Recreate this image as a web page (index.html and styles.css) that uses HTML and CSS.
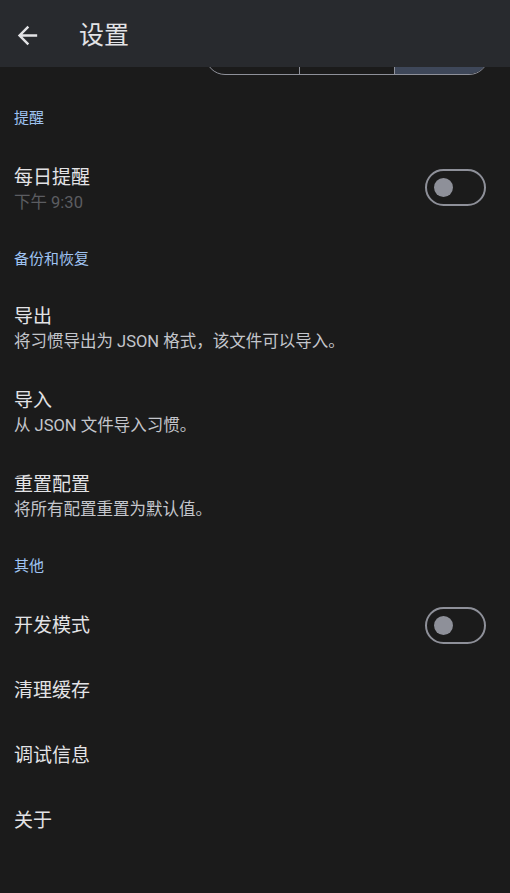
FILE: index.html
```html
<!DOCTYPE html>
<html lang="zh-CN">
<head>
    <meta charset="UTF-8">
    <meta name="viewport" content="width=device-width, initial-scale=1.0">
    <title>设置</title>
    <link rel="stylesheet" href="styles.css">
</head>
<body>
    <div class="app-bar">
        <button class="back-btn" aria-label="返回">
            <svg viewBox="0 0 24 24" width="29" height="29">
                <path d="M20 11H7.83l5.59-5.59L12 4l-8 8 8 8 1.41-1.41L7.83 13H20v-2z" fill="currentColor"/>
            </svg>
        </button>
        <h1>设置</h1>
    </div>

    <div class="content">
        <div class="theme-row">
            <div class="segmented">
                <button class="segment">浅色</button>
                <button class="segment">深色</button>
                <button class="segment active">系统</button>
            </div>
        </div>

        <div class="section-title first">提醒</div>
        <div class="list-item two-line">
            <div class="item-text">
                <div class="item-title">每日提醒</div>
                <div class="item-sub disabled">下午 9:30</div>
            </div>
            <div class="switch"><span class="thumb"></span></div>
        </div>

        <div class="section-title">备份和恢复</div>
        <div class="list-item two-line">
            <div class="item-text">
                <div class="item-title">导出</div>
                <div class="item-sub">将习惯导出为 JSON 格式，该文件可以导入。</div>
            </div>
        </div>
        <div class="list-item two-line">
            <div class="item-text">
                <div class="item-title">导入</div>
                <div class="item-sub">从 JSON 文件导入习惯。</div>
            </div>
        </div>
        <div class="list-item two-line">
            <div class="item-text">
                <div class="item-title">重置配置</div>
                <div class="item-sub">将所有配置重置为默认值。</div>
            </div>
        </div>

        <div class="section-title">其他</div>
        <div class="list-item">
            <div class="item-text">
                <div class="item-title">开发模式</div>
            </div>
            <div class="switch"><span class="thumb"></span></div>
        </div>
        <div class="list-item">
            <div class="item-text">
                <div class="item-title">清理缓存</div>
            </div>
        </div>
        <div class="list-item">
            <div class="item-text">
                <div class="item-title">调试信息</div>
            </div>
        </div>
        <div class="list-item">
            <div class="item-text">
                <div class="item-title">关于</div>
            </div>
        </div>
    </div>
</body>
</html>
```

FILE: styles.css
```css
body {
    margin: 0;
    background-color: #1b1b1b;
    color: #e3e3e6;
    font-family: Roboto, "Noto Sans CJK SC", sans-serif;
    overflow: hidden;
}
.app-bar {
    position: relative;
    z-index: 2;
    height: 67px;
    box-sizing: border-box;
    padding-top: 4px;
    background-color: #282a2e;
    display: flex;
    align-items: center;
}
.back-btn {
    background: none;
    border: none;
    padding: 0;
    margin-left: 13px;
    width: 29px;
    height: 29px;
    color: #e3e3e6;
    display: flex;
}
.app-bar h1 {
    margin: 0 0 0 37px;
    font-size: 25px;
    font-weight: 400;
    line-height: 32px;
}
.content {
    margin-top: -32px;
}
.theme-row {
    display: flex;
    justify-content: flex-end;
    padding-right: 21px;
    margin-bottom: 17px;
}
.segmented {
    display: flex;
    width: 284px;
    height: 40px;
    box-sizing: border-box;
    border: 1.2px solid #8e9099;
    border-radius: 20px;
    overflow: hidden;
}
.segment {
    flex: 1;
    background: none;
    border: none;
    border-left: 1.2px solid #8e9099;
    color: #e3e3e6;
    font-family: inherit;
    font-size: 16px;
}
.segment:first-child {
    border-left: none;
}
.segment.active {
    background-color: #3e4759;
}
.section-title {
    height: 55px;
    box-sizing: border-box;
    padding: 18px 14px 0;
    font-size: 15px;
    line-height: 20px;
    color: #9fc3f2;
}
.section-title.first {
    padding-top: 16px;
}
.list-item {
    height: 65px;
    box-sizing: border-box;
    padding: 0 24px 0 14px;
    display: flex;
    align-items: center;
}
.list-item.two-line {
    height: 84px;
    padding-top: 2px;
}
.two-line .switch {
    margin-top: -6px;
}
.item-text {
    flex: 1;
}
.item-title {
    font-size: 19px;
    line-height: 25px;
}
.item-sub {
    font-size: 16.5px;
    line-height: 26px;
    color: #c4c6cc;
}
.item-sub.disabled {
    color: #5c5d61;
}
.switch {
    width: 61px;
    height: 37px;
    box-sizing: border-box;
    border: 2.4px solid #8e9099;
    border-radius: 19px;
    display: flex;
    align-items: center;
    padding-left: 7px;
}
.thumb {
    width: 19px;
    height: 19px;
    border-radius: 50%;
    background-color: #8e9099;
}
```
